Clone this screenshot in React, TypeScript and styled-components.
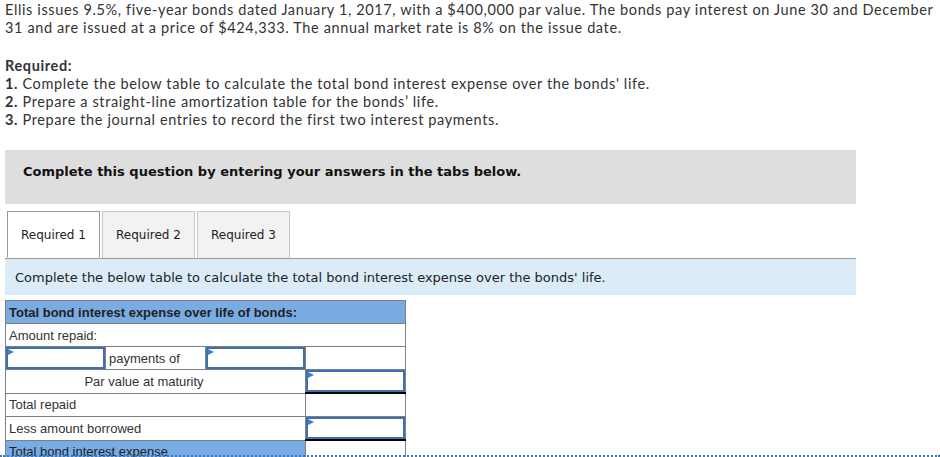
import styled, { createGlobalStyle } from 'styled-components'

const GlobalStyle = createGlobalStyle`
  html, body {
    margin: 0;
    padding: 0;
    background: #fff;
  }
`

const App = () => {
  return (
    <Root>
      <GlobalStyle />
      <Problem>
        Ellis issues 9.5%, five-year bonds dated January 1, 2017, with a $400,000 par value. The bonds pay interest on June 30 and December
        <br />
        31 and are issued at a price of $424,333. The annual market rate is 8% on the issue date.
      </Problem>
      <Required>
        <strong>Required:</strong>
        <br />
        <strong>1.</strong> Complete the below table to calculate the total bond interest expense over the bonds' life.
        <br />
        <strong>2.</strong> Prepare a straight-line amortization table for the bonds’ life.
        <br />
        <strong>3.</strong> Prepare the journal entries to record the first two interest payments.
      </Required>

      <Instruction>Complete this question by entering your answers in the tabs below.</Instruction>

      <Tabs>
        <Tab $active>Required 1</Tab>
        <Tab>Required 2</Tab>
        <Tab>Required 3</Tab>
      </Tabs>
      <Info>Complete the below table to calculate the total bond interest expense over the bonds' life.</Info>

      <Table>
        <colgroup>
          <col width={100} />
          <col width={100} />
          <col width={100} />
          <col width={100} />
        </colgroup>
        <tbody>
          <tr>
            <HeadCell colSpan={4}>Total bond interest expense over life of bonds:</HeadCell>
          </tr>
          <tr>
            <Cell colSpan={4}>Amount repaid:</Cell>
          </tr>
          <tr>
            <InputCell><Field /></InputCell>
            <Cell>payments of</Cell>
            <InputCell><Field /></InputCell>
            <Cell />
          </tr>
          <tr>
            <Cell colSpan={3} $center>Par value at maturity</Cell>
            <InputCell $underline><Field /></InputCell>
          </tr>
          <tr>
            <Cell colSpan={3}>Total repaid</Cell>
            <Cell />
          </tr>
          <tr>
            <Cell colSpan={3}>Less amount borrowed</Cell>
            <InputCell $underline><Field /></InputCell>
          </tr>
          <tr>
            <HeadCell colSpan={3} $light>Total bond interest expense</HeadCell>
            <Cell />
          </tr>
        </tbody>
      </Table>
    </Root>
  )
}
export default App

const Root = styled.div`
  position: relative;
  height: 457px;
  overflow: hidden;
  padding: 1px 5px 0;
  box-sizing: border-box;

  &::after {
    content: '';
    position: absolute;
    left: 0;
    right: 0;
    bottom: 0;
    border-top: 2px dotted #3b78c4;
  }
`
const Problem = styled.p`
  margin: 0;
  font-family: Lato, 'Open Sans', sans-serif;
  font-size: 14.5px;
  letter-spacing: 0.62px;
  line-height: 18px;
  color: #333;
  white-space: nowrap;
`
const Required = styled(Problem)`
  margin-top: 20px;

  strong {
    font-weight: 700;
  }
`
const Instruction = styled.div`
  margin-top: 21px;
  width: 851px;
  height: 54px;
  box-sizing: border-box;
  padding: 14px 0 0 18px;
  line-height: 16px;
  background: #dedede;
  font-family: 'DejaVu Sans', Verdana, sans-serif;
  font-weight: bold;
  font-size: 13px;
  color: #111;
`
const Tabs = styled.div`
  margin-top: 7px;
  width: 851px;
  display: flex;
  gap: 2px;
  padding-left: 2px;
  box-sizing: border-box;
  border-bottom: 1px solid #999;
`
const Tab = styled.div<{ $active?: boolean }>`
  width: 93px;
  height: 47px;
  box-sizing: border-box;
  display: flex;
  align-items: center;
  justify-content: center;
  font-family: 'DejaVu Sans', Verdana, sans-serif;
  font-size: 12px;
  color: #222;
  background: ${p => (p.$active ? '#fff' : '#f2f2f2')};
  border: 1px solid ${p => (p.$active ? '#999' : '#c8c8c8')};
  border-bottom: ${p => (p.$active ? '1px solid #fff' : 'none')};
  margin-bottom: ${p => (p.$active ? '-1px' : '0')};
`
const Info = styled.div`
  width: 851px;
  height: 36px;
  box-sizing: border-box;
  padding-left: 10px;
  display: flex;
  align-items: center;
  background: #dbebf8;
  font-family: 'DejaVu Sans', Verdana, sans-serif;
  font-size: 13px;
  color: #222;
`
const Table = styled.table`
  margin-top: 5px;
  width: 401px;
  border-collapse: collapse;
  table-layout: fixed;
  font-family: 'Liberation Sans', Arial, sans-serif;
  font-size: 13px;
  color: #333;
`
const Cell = styled.td<{ $center?: boolean }>`
  height: 22px;
  padding: 0 0 0 3px;
  border: 1px solid #808080;
  text-align: ${p => (p.$center ? 'center' : 'left')};
  ${p => p.$center && 'padding-right: 26px;'}
  white-space: nowrap;
`
const HeadCell = styled(Cell)<{ $light?: boolean }>`
  background: #79ace3;
  font-weight: ${p => (p.$light ? 'normal' : 'bold')};
  color: #222;
`
const InputCell = styled.td<{ $underline?: boolean }>`
  height: 22px;
  padding: 0;
  border: 1px solid #808080;
  ${p => p.$underline && 'border-bottom: 2px solid #000;'}
`
const Field = styled.div`
  position: relative;
  height: 22px;
  box-sizing: border-box;
  border: 2px solid #3d70b2;

  &::before {
    content: '';
    position: absolute;
    left: 0;
    top: 0;
    border-left: 6px solid #3a7fd5;
    border-top: 3px solid transparent;
    border-bottom: 3px solid transparent;
  }
`
